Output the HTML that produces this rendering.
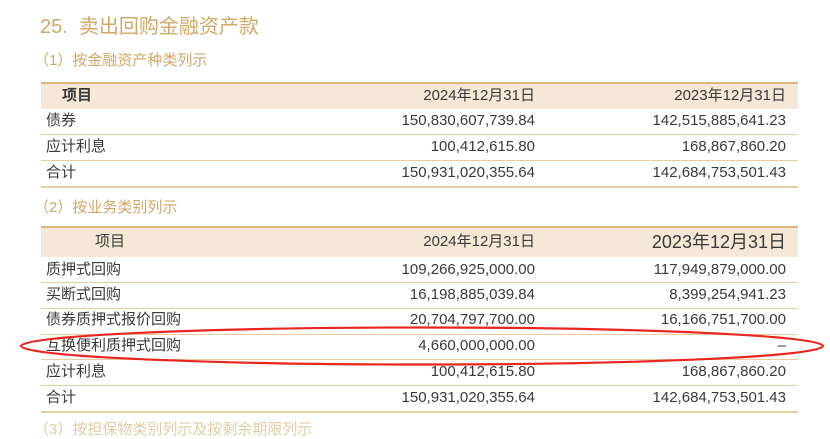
<!DOCTYPE html>
<html><head><meta charset="utf-8"><style>
body{margin:0;width:830px;height:426px;background:#fff;overflow:hidden;position:relative;font-family:"Liberation Sans","Noto Sans CJK SC",sans-serif;color:#3a3a3a}
div{line-height:18px}
.t{position:absolute;white-space:nowrap}
.title{left:40px;top:15px;font-size:20px;line-height:24px;color:#d2a868}
.sub{font-size:15px;color:#d2a868}
.hdr{position:absolute;left:41px;width:757px;background:#f5e8d6;border-top:2px solid #dcb77e}
.ln{position:absolute;left:41px;width:757px;height:1px;background:#e6cc9f}
.r{position:absolute;font-size:15px;text-align:right;white-space:nowrap}
.l{position:absolute;font-size:15px;white-space:nowrap;left:46px}
</style></head><body>
<div class="t title">25.&nbsp; 卖出回购金融资产款</div>
<div class="t sub" style="left:34px;top:52px">（1）按金融资产种类列示</div>
<div class="hdr" style="top:82px;height:25px"></div>
<div class="l" style="top:87px;left:62px;font-weight:bold">项目</div>
<div class="r" style="top:87px;right:295px">2024年12月31日</div>
<div class="r" style="top:87px;right:44px">2023年12月31日</div>
<div class="l" style="top:112px">债券</div>
<div class="r" style="top:112px;right:295px">150,830,607,739.84</div>
<div class="r" style="top:112px;right:44px">142,515,885,641.23</div>
<div class="ln" style="top:134px"></div>
<div class="l" style="top:138px">应计利息</div>
<div class="r" style="top:138px;right:295px">100,412,615.80</div>
<div class="r" style="top:138px;right:44px">168,867,860.20</div>
<div class="ln" style="top:160px"></div>
<div class="l" style="top:164px">合计</div>
<div class="r" style="top:164px;right:295px">150,931,020,355.64</div>
<div class="r" style="top:164px;right:44px">142,684,753,501.43</div>
<div class="ln" style="top:186px;height:2px"></div>
<div class="t sub" style="left:34px;top:199px">（2）按业务类别列示</div>
<div class="hdr" style="top:226px;height:29px"></div>
<div class="l" style="top:233px;left:95px">项目</div>
<div class="r" style="top:233px;right:295px">2024年12月31日</div>
<div class="r" style="top:232px;right:44px;font-size:18px;line-height:20px">2023年12月31日</div>
<div class="l" style="top:261px">质押式回购</div>
<div class="r" style="top:261px;right:295px">109,266,925,000.00</div>
<div class="r" style="top:261px;right:44px">117,949,879,000.00</div>
<div class="ln" style="top:282px"></div>
<div class="l" style="top:286px">买断式回购</div>
<div class="r" style="top:286px;right:295px">16,198,885,039.84</div>
<div class="r" style="top:286px;right:44px">8,399,254,941.23</div>
<div class="ln" style="top:308px"></div>
<div class="l" style="top:311px">债券质押式报价回购</div>
<div class="r" style="top:311px;right:295px">20,704,797,700.00</div>
<div class="r" style="top:311px;right:44px">16,166,751,700.00</div>
<div class="ln" style="top:334px"></div>
<div class="l" style="top:337px">互换便利质押式回购</div>
<div class="r" style="top:337px;right:295px">4,660,000,000.00</div>
<div class="r" style="top:337px;right:44px">–</div>
<div class="ln" style="top:359px"></div>
<div class="l" style="top:363px">应计利息</div>
<div class="r" style="top:363px;right:295px">100,412,615.80</div>
<div class="r" style="top:363px;right:44px">168,867,860.20</div>
<div class="ln" style="top:385px"></div>
<div class="l" style="top:389px">合计</div>
<div class="r" style="top:389px;right:295px">150,931,020,355.64</div>
<div class="r" style="top:389px;right:44px">142,684,753,501.43</div>
<div class="ln" style="top:411px;height:2px"></div>
<div class="t sub" style="left:34px;top:421px;opacity:.6">（3）按担保物类别列示及按剩余期限列示</div>
<svg style="position:absolute;left:0;top:0" width="830" height="426"><ellipse cx="422" cy="346" rx="401" ry="18.5" fill="none" stroke="#e8261f" stroke-width="2.2"/></svg>
</body></html>
